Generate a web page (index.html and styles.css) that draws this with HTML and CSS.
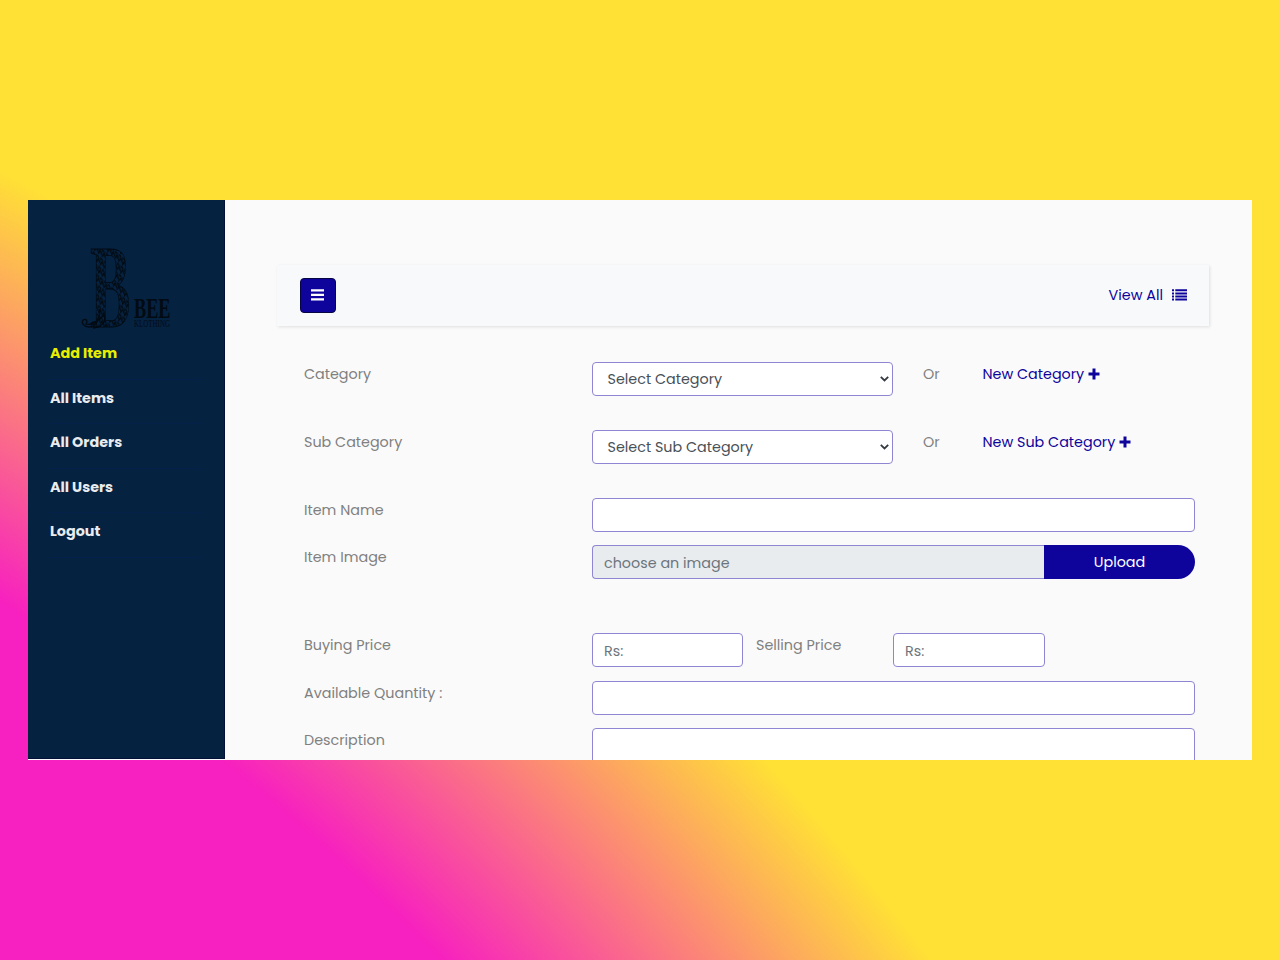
FILE: index.html
```html
<!DOCTYPE html>
<html lang="en">
<head>
<meta charset="utf-8">
<title>Add Item</title>
<link rel="stylesheet" href="styles.css">
</head>
<body>
<div class="window">
  <aside class="sidebar">
    <svg class="logo" width="96" height="88" viewBox="0 0 96 88" role="img" aria-label="B Bee Klothing">
      <defs>
        <pattern id="lace" width="8" height="9" patternUnits="userSpaceOnUse" patternTransform="rotate(24)">
          <path d="M0 1Q3 0 4 3T8 5M1 8Q0 4 3 6M6 0Q8 1 6 4" fill="none" stroke="#020a12" stroke-width="1.7"/>
          <circle cx="2.4" cy="4" r="1.3" fill="#020a12"/>
        </pattern>
      </defs>
      <text class="logo-b" transform="translate(10 80) scale(.51 1)" font-size="119" fill="url(#lace)" stroke="#020a12" stroke-width=".8">B</text>
      <path d="M20 62C20 74 15 80 9 80C4 80 1 76 3 73C7 71 8 75 6 77C12 79 18 74 24 68C27 75 20 81 13 81" fill="none" stroke="#020a12" stroke-width="1.3"/>
      <text class="logo-b" x="54" y="71" font-size="29" textLength="36.5" lengthAdjust="spacingAndGlyphs" fill="#020a12">BEE</text>
      <text class="logo-k" x="54" y="80" font-size="9.5" textLength="36" lengthAdjust="spacingAndGlyphs" fill="#020c18">KLOTHING</text>
    </svg>
    <nav class="menu">
      <a class="active">Add Item</a>
      <a>All Items</a>
      <a>All Orders</a>
      <a>All Users</a>
      <a>Logout</a>
    </nav>
  </aside>
  <main class="content">
    <header class="toolbar">
      <button class="toggle" aria-label="Menu">
        <svg width="13" height="12" viewBox="0 0 13 12"><path d="M0 1.4h13M0 5.9h13M0 10.4h13" stroke="#fff" stroke-width="2.2"/></svg>
      </button>
      <a class="view-all"><span>View All</span>
        <svg width="15" height="12" viewBox="0 0 15 12"><path d="M0 1.3h2M0 4.4h2M0 7.5h2M0 10.6h2M3.3 1.3H15M3.3 4.4H15M3.3 7.5H15M3.3 10.6H15" stroke="#0e049c" stroke-width="2"/></svg>
      </a>
    </header>
    <form class="form">
      <div class="row spaced">
        <label>Category</label>
        <div class="field select"><span>Select Category</span><svg width="9" height="6" viewBox="0 0 9 6"><path d="M.8.9 4.5 4.5 8.2.9" fill="none" stroke="#343a40" stroke-width="1.8"/></svg></div>
        <span class="or">Or</span>
        <a class="new"><span>New Category</span><svg width="12" height="12" viewBox="0 0 12 12"><path d="M6 .5v11M.5 6h11" stroke="#0e049c" stroke-width="3"/></svg></a>
      </div>
      <div class="row spaced">
        <label>Sub Category</label>
        <div class="field select"><span>Select Sub Category</span><svg width="9" height="6" viewBox="0 0 9 6"><path d="M.8.9 4.5 4.5 8.2.9" fill="none" stroke="#343a40" stroke-width="1.8"/></svg></div>
        <span class="or">Or</span>
        <a class="new"><span>New Sub Category</span><svg width="12" height="12" viewBox="0 0 12 12"><path d="M6 .5v11M.5 6h11" stroke="#0e049c" stroke-width="3"/></svg></a>
      </div>
      <div class="row">
        <label>Item Name</label>
        <div class="field wide"></div>
      </div>
      <div class="row image-row">
        <label>Item Image</label>
        <div class="upload wide"><div class="field file">choose an image</div><button type="button" class="upload-btn">Upload</button></div>
      </div>
      <div class="row">
        <label>Buying Price</label>
        <div class="prices wide"><div class="field price">Rs:</div><label>Selling Price</label><div class="field price">Rs:</div></div>
      </div>
      <div class="row">
        <label>Available Quantity :</label>
        <div class="field wide"></div>
      </div>
      <div class="row">
        <label>Description</label>
        <div class="field wide area"></div>
      </div>
    </form>
  </main>
</div>
</body>
</html>
```
FILE: styles.css
```css
* { box-sizing: border-box; }

body {
  margin: 0;
  height: 960px;
  padding: 200px 28px;
  overflow: hidden;
  background: radial-gradient(circle at -1300px 2650px, #f720c0 2425px, #ffe135 2800px);
  font-family: Poppins, Inter, sans-serif;
  font-size: 14.34px;
  line-height: 22px;
  color: #808080;
}

.window {
  display: flex;
  height: 560px;
  overflow: hidden;
  background: #fafafa;
}

.sidebar {
  width: 197px;
  height: 559px;
  padding: 47px 22px 0;
  background: #052241;
  border-right: 1px solid #03103a;
  border-bottom: 1px solid #03103a;
}

.logo { display: block; margin-left: 30px; overflow: visible; }
.logo-b { font-family: "Liberation Serif", serif; font-weight: 700; }
.logo-k { font-family: "Liberation Serif", serif; }

.menu a {
  display: block;
  height: 44.5px;
  padding-top: 7.3px;
  border-bottom: 1px solid #05204a;
  color: #e9ecef;
  font-weight: 700;
}
.menu .active { color: #e8ee00; }

.content { flex: 1; padding: 65px 43px 0 52px; }

.toolbar {
  display: flex;
  align-items: center;
  justify-content: space-between;
  height: 61px;
  padding: 0 22px 0 22.5px;
  background: #f8f9fb;
  box-shadow: 1px 1px 3px rgba(0, 0, 0, .11);
}

.toggle {
  display: flex;
  align-items: center;
  justify-content: center;
  width: 36px;
  height: 35px;
  padding: 0 0 1px;
  border: 1px solid #080544;
  border-radius: 4px;
  background: #0e049c;
}

.view-all { display: flex; align-items: center; gap: 9px; padding-bottom: 2px; color: #0e049c; }

.form { padding: 36px 14px 0 27px; }

.row {
  display: grid;
  grid-template-columns: 288px 301px 60px 1fr;
  align-items: start;
  margin-bottom: 13.4px;
}
.row.spaced { margin-bottom: 34px; }
.row.image-row { margin-bottom: 53.9px; }
.row > label, .or, .new { padding-top: 1px; }
.or { padding-left: 30px; }
.new { display: flex; align-items: center; gap: 4px; padding-left: 29.5px; white-space: nowrap; color: #0e049c; }

.field {
  height: 34px;
  padding: 6px 11px;
  border: 1px solid #8f86d3;
  border-radius: 4px;
  background: #fff;
  color: #6c757d;
}
.select { display: flex; align-items: center; justify-content: space-between; padding: 0 3px 0 14.5px; color: #495057; }
.wide { grid-column: 2 / -1; }
.upload { display: flex; }
.file { flex: 1; background: #e8ecef; border-right: 0; border-radius: 4px 0 0 4px; }
.upload-btn {
  width: 151px;
  height: 34px;
  padding: 0;
  border: 0;
  border-radius: 0 17px 17px 0;
  background: #0e049c;
  color: #fff;
  font: inherit;
}
.prices { display: grid; grid-template-columns: 151px 150px 152px; }
.prices label { padding: 1px 0 0 13px; }
.area { height: 80px; }
```
